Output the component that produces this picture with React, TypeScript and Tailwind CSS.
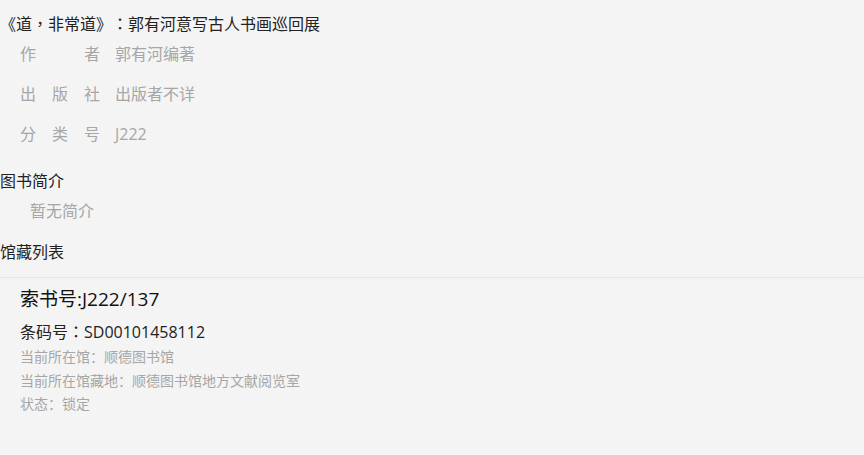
import React from "react";

const rows = [
  { label: ["作", "者"], value: "郭有河编著" },
  { label: ["出", "版", "社"], value: "出版者不详" },
  { label: ["分", "类", "号"], value: "J222" },
];

function P({ c }: { c: string }) {
  return <span style={{ fontFamily: '"Noto Sans CJK TC", sans-serif' }}>{c}</span>;
}

export default function App() {
  return (
    <div
      className="min-h-[455px] w-full bg-[#f4f4f4] pt-[13px] text-[#333] [text-spacing-trim:space-all]"
      style={{ fontFamily: '"Open Sans", "Noto Sans CJK SC", sans-serif' }}
    >
      <div className="text-[16px] leading-[20px] text-[#222]">
        《道<P c="，" />非常道》<P c="：" />郭有河意写古人书画巡回展
      </div>
      <div>
        {rows.map((r) => (
          <div key={r.value} className="flex h-[40px] items-center text-[16px] leading-[40px]">
            <div className="ml-[20px] flex w-[80px] justify-between text-[#a6a6a6]">
              {r.label.map((c, i) => (
                <span key={i}>{c}</span>
              ))}
            </div>
            <div className="ml-[15px] text-[#a6a6a6]">{r.value}</div>
          </div>
        ))}
      </div>
      <div className="mt-[12px] text-[16px] leading-[30px] text-[#222]">图书简介</div>
      <div className="pl-[30px] text-[16px] leading-[30px] text-[#a6a6a6]">暂无简介</div>
      <div className="mt-[11px] text-[16px] leading-[30px] text-[#222]">馆藏列表</div>
      <div className="mt-[10px] border-t border-[#e6e6e6]" />
      <div className="pl-[20px]">
        <div className="mt-[6px] text-[19px] leading-[30px] text-[#111]">索书号:J222/137</div>
        <div className="mt-[5px] text-[16px] leading-[24px] text-[#222]">
          条码号<P c="：" />SD00101458112
        </div>
        <div className="mt-[1px] text-[14px] leading-[23.5px] text-[#a6a6a6]">
          <div>当前所在馆：顺德图书馆</div>
          <div>当前所在馆藏地：顺德图书馆地方文献阅览室</div>
          <div>状态：锁定</div>
        </div>
      </div>
    </div>
  );
}
